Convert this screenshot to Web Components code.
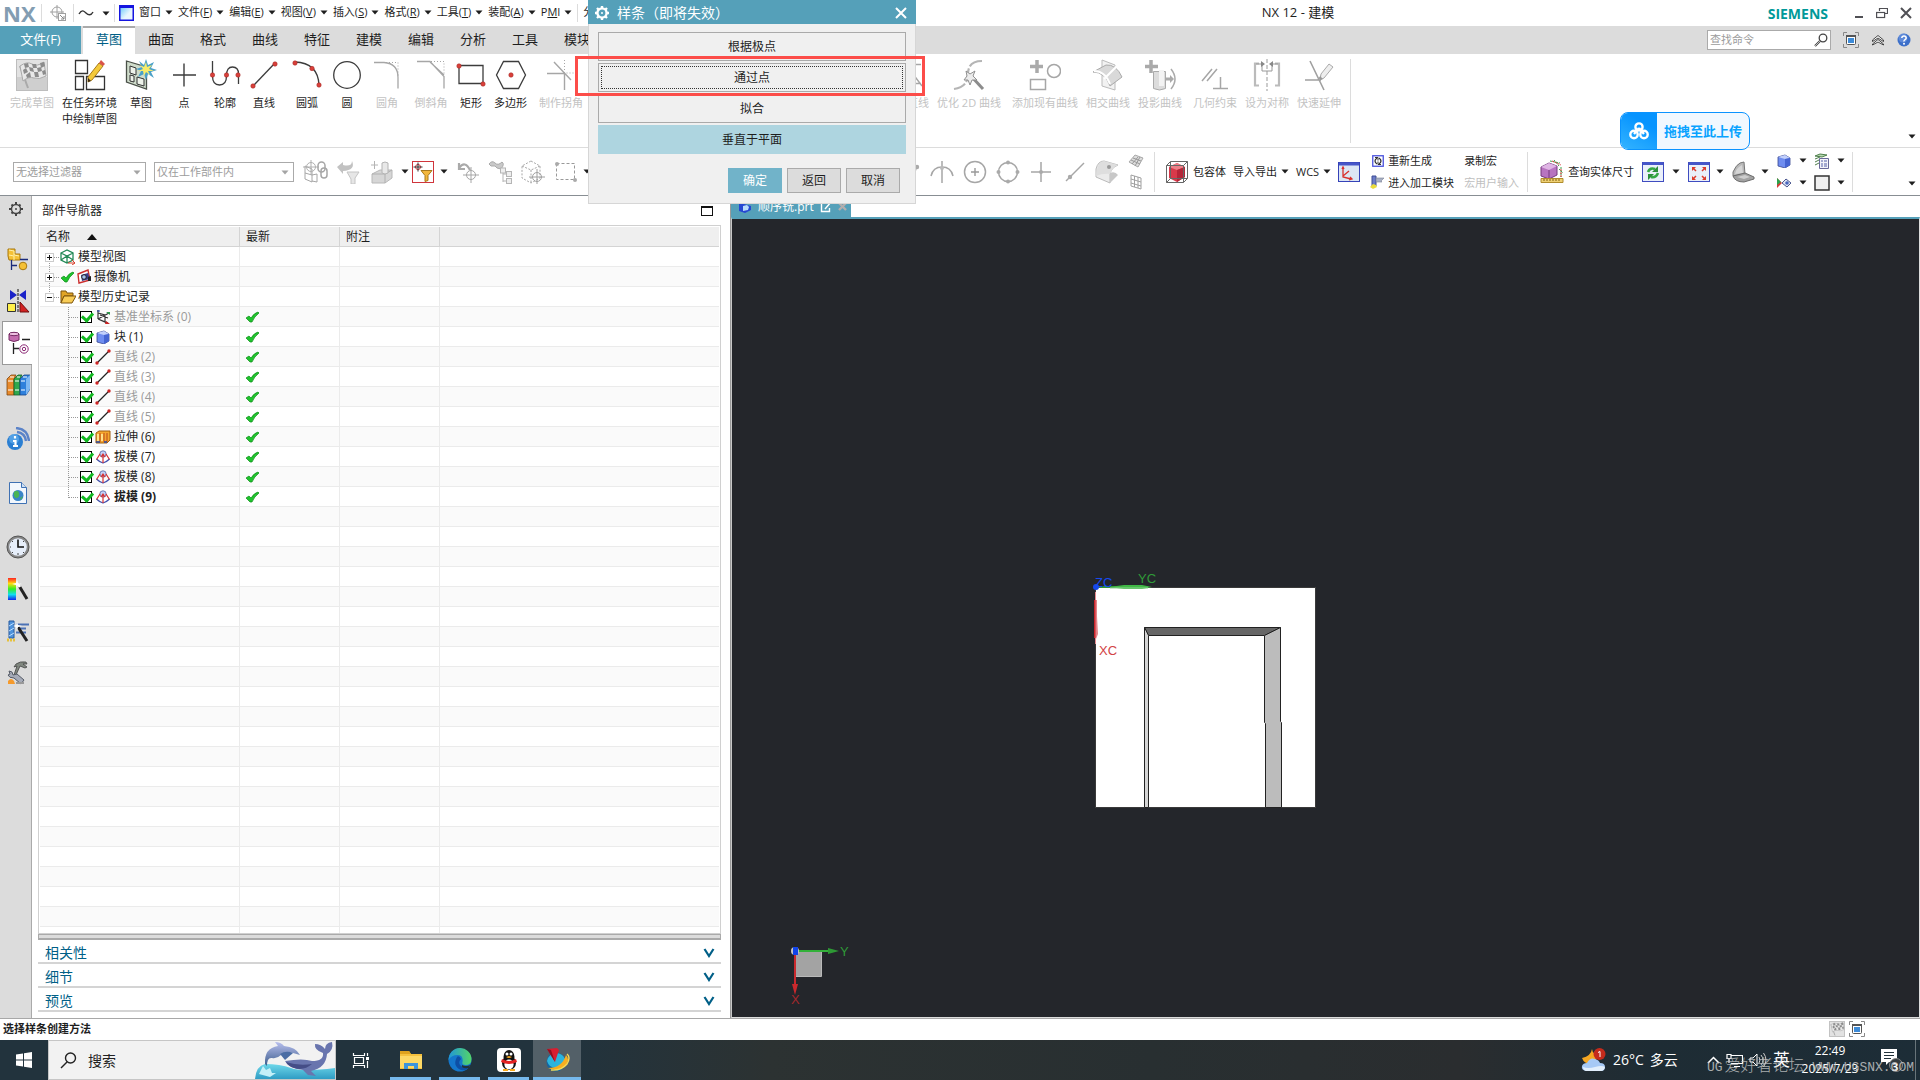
<!DOCTYPE html>
<html lang="zh-CN">
<head>
<meta charset="utf-8">
<title>NX 12 - 建模</title>
<style>
	html,body{margin:0;height:100%}
	body{
		display:flex;flex-direction:column;position:relative;overflow:hidden;background:white;color:#1e1e1e;
		font:11px/16px "Open Sans","Noto Sans CJK SC",sans-serif;
		--teal:#55a0b9;--line:#dcdcdc;--ink:#005f87;
	}
</style>
</head>
<body>
<nx-titlebar></nx-titlebar>
<nx-tabs></nx-tabs>
<nx-ribbon></nx-ribbon>
<nx-selectbar></nx-selectbar>
<nx-workarea>
	<nx-sidebar slot="rail"></nx-sidebar>
	<part-navigator slot="panel"></part-navigator>
	<nx-viewport></nx-viewport>
</nx-workarea>
<nx-status>选择样条创建方法</nx-status>
<win-taskbar></win-taskbar>
<upload-pill>拖拽至此上传</upload-pill>
<spline-dialog>样条（即将失效）</spline-dialog>
<red-mark></red-mark>
<water-mark>爱好者论坛</water-mark>

<script>
// every icon: [width, height, svg content]
const G='stroke="#a6a6a6" fill="none"';
const K='stroke="#3c3c3c" fill="none" stroke-width="1.3"';
const R='fill="#d9403a" stroke="#a82a26" stroke-width=".6"';
const flag=`<path d="M4 7L12 29" stroke="#aaa" stroke-width="2"/><path d="M4 7q7-5 12-2t12-2l2 14q-7 4-12 2t-11 3z" fill="#e8e8e8" stroke="#aaa"/><path d="M8 5l4-1 1 4-4 1zM16 5l4 0 1 4-4 0zM24 4l4-1 1 4-4 2zM13 8l4 1 1 4-4-1zM21 9l4-1 1 4-4 1zM7 11l3-2 2 4-4 2zM18 13l4 0 1 5-4 0zM10 16l4-3 1 5-4 1zM26 12l3-1 1 4-3 1z" fill="#8c8c8c"/>`;
const cross=(x,y,c)=>`<circle cx="${x}" cy="${y}" r="4.5" fill="none" stroke="${c}"/><path d="M${x-8} ${y}h16M${x} ${y-8}v16" stroke="${c}"/>`;
const ICONS={
	arrow:[8,5,'<path d="M.5.5h7L4 4.5z" fill="#1e1e1e"/>'],
	target:[16,16,'<circle cx="7" cy="7" r="5" fill="none" stroke="#a0a0a0"/><path d="M0 7h14M7 0v14" stroke="#a0a0a0"/><rect x="8.5" y="8.5" width="7" height="7" fill="#fff" stroke="#a0a0a0"/><path d="M10 10l4 4m0-3v3h-3" fill="none" stroke="#888"/>'],
	tilde:[16,8,'<path d="M1 5C4 0 6 2 8 4s5 3 7-1" fill="none" stroke="#333" stroke-width="1.4"/>'],
	window:[15,16,'<defs><linearGradient id="a" x2="1" y2="1"><stop offset="0" stop-color="#5fc4fa"/><stop offset=".6" stop-color="#e9f6fe"/></linearGradient></defs><rect x=".75" y=".75" width="13.5" height="14.5" fill="url(#a)" stroke="#1515e0" stroke-width="1.5"/><path d="M1 2h13" stroke="#1515e0" stroke-width="2"/>'],
	min:[10,12,'<path d="M1 10h8" stroke="#505055" stroke-width="2"/>'],
	restore:[12,12,'<path d="M3.5 4V1.5h8v5H9" fill="none" stroke="#505055" stroke-width="1.2"/><rect x=".6" y="5.5" width="8" height="5" fill="none" stroke="#505055" stroke-width="1.2"/>'],
	close:[12,12,'<path d="M1 1l10 10M11 1L1 11" stroke="#505055" stroke-width="2"/>'],
	search:[14,14,'<circle cx="9" cy="5" r="3.8" fill="#fff" stroke="#444" stroke-width="1.3"/><path d="M6 8l-5 5" stroke="#444" stroke-width="2.2"/><path d="M6 8l-5 5" stroke="#eee" stroke-width=".7"/>'],
	full:[16,16,'<path d="M.5 4V.5H4M12 .5h3.5V4M15.5 12v3.5H12M4 15.5H.5V12" fill="none" stroke="#888"/><rect x="3.5" y="3.5" width="9" height="9" rx="1" fill="#fff" stroke="#555"/><path d="M3 4h10" stroke="#555" stroke-width="2"/><rect x="5" y="6" width="6" height="5" fill="#3d8bd8"/>'],
	up2:[14,12,'<path d="M1.5 6L7 1.5 12.500 6v1.500L7 4 1.500 7.500zM1.500 10L7 5.500l5.500 4.500v1L7 8l-5.500 3z" fill="#fff" stroke="#333" stroke-width=".9"/>'],
	help:[14,14,'<circle cx="7" cy="7" r="6.5" fill="#3c6fc9"/><circle cx="6" cy="5" r="4.5" fill="#759de4" opacity=".6"/><path d="M4.8 5q.2-2 2.2-2t2.2 2q0 1-1.2 1.7T7 8.5" fill="none" stroke="#fff" stroke-width="1.5"/><circle cx="7" cy="10.7" r="1" fill="#fff"/>'],
	finish:[32,32,'<rect x=".5" y=".5" width="31" height="31" fill="#e2e2e2" stroke="#bdbdbd"/><path d="M1 18h30v13H1z" fill="#cfcfcf"/>'+flag],
	task:[32,32,`<path d="M1.5 1.5h12v13h-12zM1.5 17.5h8v13h-8zM12.5 17.5h18v13h-18z" fill="#fff" stroke="#333" stroke-width="1.3"/><path d="M25 4l4 3-11 14-4 2 0-5z" fill="#f4c93a" stroke="#a77b1b"/><path d="M25 4l4 3 2-2-4-4z" fill="#d9544a"/><path d="M14 19l0 4 3-1z" fill="#3b2a14"/>`],
	sketch:[32,32,`<path d="M1.5 2l20 6v22l-20-7z" fill="#cfdccb" stroke="#4a5048" stroke-width="1.3"/><path d="M5 7l6 2v7l-6-2zM5 16l4 1v6l-4-1zM12 18l7 2v7l-7-2z" fill="#eef3ea" stroke="#333"/><path d="M21 0l2 6 6-3-3 6 6 2-6 2 3 6-6-4-2 6-2-6-6 3 3-6-5-2 6-2-3-6 5 4z" fill="#4aa0c8"/><path d="M21 3l1 5 5-2-3 4 5 2-6 0 2 4-4-3-2 4-1-5-5 0 5-2-3-4 4 2z" fill="#f8ec6a"/>`],
	point:[24,32,'<path d="M12 4.5v23M1 16h23" stroke="#3c3c3c" stroke-width="1.4"/>'],
	profile:[32,32,`<path d="M3.5 2v15q0 9 7 9t7-9 6-9 6 7v10" ${K}/><circle cx="3.5" cy="16" r="2.2" ${R}/><circle cx="17.5" cy="16" r="2.2" ${R}/><circle cx="29" cy="16" r="2.2" ${R}/>`],
	line:[28,32,`<path d="M3 27L25 4" ${K}/><circle cx="3" cy="27" r="2.2" ${R}/><circle cx="25" cy="5" r="2.2" ${R}/>`],
	arc:[30,32,`<path d="M3 3Q26 4 27 26" ${K}/><circle cx="3" cy="4" r="2.2" ${R}/><circle cx="20" cy="9.5" r="2.2" ${R}/><circle cx="27" cy="26" r="2.2" ${R}/>`],
	circle:[30,32,`<circle cx="15" cy="16" r="13.3" ${K}/>`],
	fillet:[30,32,`<path d="M2 3.5h10q14 1 14 15v11" ${G} stroke-width="1.3"/><path d="M14 3.5h12v13" ${G} stroke-dasharray="1 2"/>`],
	chamfer:[32,32,`<path d="M2 2.5h13l14 15v12M15 3l14 13" ${G} stroke-width="1.3"/><path d="M16 2.5h13v13" ${G} stroke-dasharray="1 2"/>`],
	rect:[30,32,`<path d="M3 6.5h24v18H3z" ${K}/><circle cx="3" cy="7" r="2.2" ${R}/><circle cx="27" cy="25" r="2.2" ${R}/>`],
	polygon:[32,32,`<path d="M8.5 2.5h15L30.5 16l-7 13.5h-15L1.5 16z" ${K}/><circle cx="16" cy="16" r="2.2" ${R}/>`],
	corner:[32,32,`<path d="M2 14.5h17M19.5 14v17M9 3l17 18" ${G} stroke-width="1.4"/><path d="M19.5 1v13h9" ${G} stroke-dasharray="1 2"/>`],
	derive:[32,32,`<path d="M2 5.5h28M2 24.5h28M22 15l9 12" ${G} stroke-width="1.4"/>`],
	optimize:[32,32,'<path d="M29 2q-14 0-14 13T1 30" fill="none" stroke="#b5b5b5" stroke-width="2.2" stroke-dasharray="14 2"/><path d="M18 17l12 13" stroke="#8c8c8c" stroke-width="3"/><path d="M13 12l4 3 5-3-2 5 4 4-5 0-2 5-2-5-4 0 3-4z" fill="#ececec" stroke="#909090"/>'],
	addcurve:[32,32,`<path d="M8 1v13M1 7.5h13" stroke="#aaa" stroke-width="3.5"/><circle cx="25" cy="12" r="6.5" ${G} stroke-width="1.5"/><path d="M1.5 20.5h15v10h-15z" ${G} stroke-width="1.5"/>`],
	intersect:[32,32,'<path d="M10 1l13 5v25l-13-4z" fill="#f2f2f2" stroke="#bbb"/><path d="M1 13q12 0 17 14l12-9Q24 5 14 6z" fill="#d9d9d9" stroke="#aaa"/><path d="M2 12q11 0 16 13M12 20L25 7" stroke="#fff" fill="none" stroke-width="2"/>'],
	project:[32,32,'<path d="M7 1v13M1 7.5h13" stroke="#aaa" stroke-width="3.5"/><path d="M9.5 12.5h12v17q-6 3-12 0z" fill="#dcdcdc" stroke="#aaa"/><path d="M15 11h5v16h-5z" fill="#f3f3f3"/><path d="M22 20h6" stroke="#aaa" stroke-width="3"/><path d="M26 16l4 4-4 4z" fill="#aaa"/><path d="M27 10q8 10 0 20" fill="none" stroke="#aaa" stroke-width="1.5"/>'],
	geocon:[28,32,`<path d="M1 22l10-12M6 22l10-12M19.5 18v12M12 29.5h15" ${G} stroke-width="1.5"/>`],
	symmetric:[28,32,'<path d="M6 4.5H2v22h4M22 4.5h4v22h-4" fill="none" stroke="#bbb" stroke-width="2.2"/><path d="M14 0v32" stroke="#999" stroke-dasharray="4 2"/><path d="M3 5h6v7h10V5h6" fill="none" stroke="#999"/><path d="M8 2l4 3-4 3zM20 2l-4 3 4 3z" fill="#888"/>'],
	extend:[30,32,'<path d="M1 21h16M6 2l14 29M14 21l4-5" fill="none" stroke="#a0a0a0" stroke-width="1.6"/><path d="M25 5l4 3-9 11-4 2 1-6z" fill="#eee" stroke="#aaa"/><path d="M16 17v4l3-1z" fill="#999"/>'],
	link:[26,24,`<path d="M2 6l7 3v13l-7-3zM9 15l5-1v8l-5-1M2 13l7 2" ${G}/>${cross(8,7,'#b0b0b0')}<rect x="15" y="2" width="7" height="10" rx="3.5" ${G} stroke-width="1.5"/><rect x="18" y="8" width="6" height="10" rx="3" ${G} stroke-width="1.5"/>`],
	backfilter:[24,24,'<path d="M1 7l6-5v3q9 2 9-4 4 9-9 10v3z" fill="#c2c2c2"/><path d="M11 12h12l-4 6v6h-4v-5z" fill="#e6e6e6" stroke="#c4c4c4"/>'],
	solid:[24,24,'<path d="M2 14l8-4h12v8l-7 5H2z" fill="#d6d6d6" stroke="#b8b8b8"/><path d="M2 14h13v9M15 14l7-4" fill="none" stroke="#b0b0b0"/><path d="M12 3q3-2 6 0v10q-3 2-6 0z" fill="#e8e8e8" stroke="#b4b4b4"/><path d="M1 5h7M4.5 1v8" stroke="#b4b4b4"/>'],
	filter:[22,22,'<rect x=".5" y=".5" width="21" height="21" fill="#fff" stroke="#d0353c"/><circle cx="6" cy="6" r="2.5" fill="none" stroke="#d0353c"/><path d="M1.5 6h9M6 1.5v9" stroke="#333"/><path d="M9 9.5h11l-4 5v5l-3 1v-6z" fill="#f3b73c" stroke="#a8791b"/>'],
	rotback:[24,24,'<path d="M3 3v6h6M3 8q6-8 11 2" fill="none" stroke="#aaa" stroke-width="2.2"/>'+cross(15,15,'#a6a6a6')],
	binoc:[24,24,'<path d="M1 4q3-4 6-1t7-1q3 2-1 7l-4-1-2-2-4 0z" fill="#c9c9c9" stroke="#aaa"/><path d="M15 8v14M15 14h5M15 21h5" stroke="#b5b5b5"/><rect x="12.5" y="8" width="5" height="5" fill="#eee" stroke="#b5b5b5"/><rect x="18.5" y="11.5" width="5" height="5" fill="#eee" stroke="#b5b5b5"/><rect x="18.5" y="18.5" width="5" height="5" fill="#eee" stroke="#b5b5b5"/>'],
	dashcube:[24,24,`<path d="M10 1l9 5v12l-9 5-9-5V6zM1 6l9 4 9-4M10 10v13" ${G} stroke-dasharray="2 1.5"/>${cross(16,17,'#a0a0a0')}`],
	marquee:[22,22,'<rect x="1.5" y="2.5" width="18" height="16" fill="none" stroke="#999" stroke-dasharray="3 2"/><circle cx="2" cy="3" r="2" fill="#aaa"/><circle cx="20" cy="19" r="2" fill="#aaa"/>'],
	endpt:[20,24,`<path d="M3 21q12-4 13-13" ${G} stroke-width="1.8"/><circle cx="17" cy="7" r="2.2" fill="#aaa"/>`],
	snapx:[24,24,`<path d="M12 1v22M1 16q2-9 11-9t11 9" ${G} stroke-width="1.5"/><circle cx="12" cy="8" r="2" fill="#bbb"/>`],
	center:[24,24,`<circle cx="12" cy="12" r="10.5" ${G} stroke-width="1.5"/><path d="M8 12h8M12 8v8" stroke="#999" stroke-width="1.4"/>`],
	quad:[24,24,`<circle cx="12" cy="12" r="9.5" ${G} stroke-width="1.5"/><g fill="#aaa"><circle cx="12" cy="2.5" r="2"/><circle cx="21.5" cy="12" r="2"/><circle cx="12" cy="21.5" r="2"/><circle cx="2.5" cy="12" r="2"/></g>`],
	exist:[22,24,'<path d="M11 2v20M1 12h20" stroke="#a6a6a6" stroke-width="1.5"/><circle cx="11" cy="12" r="2" fill="#aaa"/>'],
	oncurve:[20,22,'<path d="M1 20L19 2" stroke="#a6a6a6" stroke-width="1.5"/><circle cx="5" cy="16" r="2.2" fill="#aaa"/>'],
	face:[24,24,'<path d="M1 9Q3 1 9 1l14 4q-7 3-8 9v9L1 17z" fill="#ebebeb" stroke="#bbb"/><path d="M9 1l14 4q-7 3-7 9-8-1-15 2Q2 2 9 1z" fill="#dedede"/><path d="M15 13q5-2 8 2l-8 8z" fill="#c8c8c8"/><circle cx="14" cy="7" r="2" fill="#999"/>'],
	mesh:[16,14,'<path d="M1 8L7 1l8 3-5 9z" fill="#ddd" stroke="#aaa"/><path d="M3 6l9 4M5 4l8 3M4 10l6-7M7 12l5-9" stroke="#999"/>'],
	grid:[12,16,'<path d="M1 1l10 3v11L1 12zM1 5l10 3M1 9l10 3M4.5 2v11M8 3v11" fill="none" stroke="#a0a0a0"/>'],
	bbox:[24,24,'<path d="M4 7l8-4 8 4v10l-8 5-8-4z" fill="#d8394a"/><path d="M4 7l8-4 8 4-8 3z" fill="#ee8088"/><path d="M12 10l8-3v10l-8 5z" fill="#b52538"/><path d="M1.5 5.5h17v17h-17zM5.5 1.5h17v17h-17zM1.5 5.5l4-4M18.5 5.5l4-4M18.5 22.5l4-4M1.5 22.5l4-4" fill="none" stroke="#666"/>'],
	wcs:[22,20,'<rect x=".5" y=".5" width="21" height="19" fill="#dbe6f4" stroke="#3542b8"/><path d="M1 2h20" stroke="#4656c8" stroke-width="3"/><path d="M5 5v10l8 2M5 14l6-5M4 7l1-2 1 2M12 15l2 2-3 1" fill="none" stroke="#d8302c" stroke-width="1.3"/>'],
	regen:[12,12,'<rect x=".75" y=".75" width="10.5" height="10.5" fill="#fff" stroke="#4a52dc" stroke-width="1.3"/><path d="M5 3Q1 6 5 9M7 3q4 3 0 6" fill="none" stroke="#333" stroke-width="1.3"/><path d="M3 2.5h3v3M9 9.5H6v-3" fill="none" stroke="#333"/>'],
	cam:[14,15,'<path d="M2 1h4v10H2z" fill="#6b7cc8" stroke="#3f4d94"/><path d="M6 3h8l-3 3 1 1H6z" fill="#a9b1c5" stroke="#7a8096" stroke-width=".6"/><path d="M0 12l3 2 4-2-1-2-3-1z" fill="#eadc3c"/>'],
	measure:[24,24,'<path d="M1 7l8-4 8 3v9l-8 4-8-3z" fill="#b774c0" stroke="#74397d"/><path d="M1 7l8 3 8-4-8-3z" fill="#dfb5e4"/><path d="M9 10v9" stroke="#74397d"/><path d="M10 1l10 2M14 0l5 6M21 7v10M19 9l4 4" stroke="#3a9e4b" stroke-dasharray="2 1"/><path d="M12 1l9 4M21 9v8" stroke="#dc3c3c" stroke-dasharray="2 1"/><path d="M1 18.5h22v4H1z" fill="#efd073" stroke="#b08d2e"/><path d="M4 19v2m3-2v2m3-2v2m3-2v2m3-2v2m3-2v2" stroke="#806010"/>'],
	refresh:[22,20,'<rect x=".5" y=".5" width="21" height="19" fill="#eaf0fa" stroke="#3f4cc0"/><path d="M1 1.5h20" stroke="#4656c8" stroke-width="3"/><path d="M6 10q2-5 7-3M16 11q-2 5-7 4" fill="none" stroke="#35a845" stroke-width="2.6"/><path d="M16 4v6h-6zM6 18v-6h6z" fill="#2c8f3a"/>'],
	fit:[22,20,'<rect x=".5" y=".5" width="21" height="19" fill="#eaf0fa" stroke="#3f4cc0"/><path d="M1 1.5h20" stroke="#4656c8" stroke-width="3"/><path d="M5 6l3 3M17 6l-3 3M5 17l3-3M17 17l-3-3" stroke="#dc3c2c" stroke-width="1.5"/><path d="M4 5h4l-4 4zM18 5h-4l4 4zM4 18h4l-4-4zM18 18h-4l4-4z" fill="#dc3c2c"/>'],
	laptop:[24,22,'<path d="M2 15V11Q5 4 9 2l4-1 1 12z" fill="#b9b9b9" stroke="#777"/><path d="M4 13q1-6 7-9l1 8z" fill="#d6d6d6"/><path d="M2 15l12-3 9 4v2l-10 3q-9 0-11-6z" fill="#a2a2a2" stroke="#6c6c6c"/><path d="M6 16l8-2 5 2-6 2z" fill="#cdcdcd"/>'],
	cube:[14,14,'<path d="M1 3l7-2 5 3v7l-5 3-7-2z" fill="#6f8df0" stroke="#38468f" stroke-width=".8"/><path d="M1 3l7 2 5-1-5-3z" fill="#c2d0fb"/><path d="M8 5v9l5-3V4z" fill="#4564d2"/>'],
	layers:[16,16,'<path d="M1 3l5-2 7 1-5 2zM1 6l5-2M1 9l4-2M1 12l4-2" fill="#b7d9b0" stroke="#4f7f4d"/><path d="M5.5 5.5h9v10h-9z" fill="#f3f3fa" stroke="#6a6a9a"/><path d="M7 8h2m1 0h3M7 11h2m1 0h3M7 13h2m1 0h3" stroke="#5561a8"/>'],
	showhide:[16,12,'<path d="M1 1l5 5-5 5z" fill="#d53a3a"/><path d="M1 1l4 4-4 3z" fill="#2ba24c"/><path d="M6 6l4-4 5 4-4 4z" fill="#dfe4f3" stroke="#4a568e"/><circle cx="11" cy="6" r="1.8" fill="#4765bc"/>'],
	white:[16,16,'<rect x="1" y="1" width="14" height="14" fill="#f0f0f0" stroke="#333" stroke-width="1.5"/>'],
	gear:[14,14,'<circle cx="7" cy="7" r="4.5" fill="none" stroke="#444" stroke-width="1.4"/><path d="M7 0v2.5m0 9V14M0 7h2.5m9 0H14M2.5 2.5L4 4m6 6l1.5 1.5M11.5 2.5L10 4m-6 6l-1.5 1.5" stroke="#444" stroke-width="2"/><circle cx="7" cy="7" r="1" fill="#444"/>'],
	asm:[24,24,'<path d="M2 2h7v5h5v6H3l-1-4z" fill="#f5c136" stroke="#a8790f"/><path d="M3 3l5 1v4l5 1M3 8l5 1v4" stroke="#fff0a8" fill="none"/><path d="M14 12.5h8M5.5 13v10M5 18.5h6" stroke="#1a2a7a" stroke-width="1.3"/><circle cx="17" cy="19" r="3.8" fill="#f5c136" stroke="#a8790f"/>'],
	constraint:[24,24,'<path d="M4 1l7 5-7 5zM20 1l-7 5 7 5z" fill="#1a22c8"/><path d="M12 0v24" stroke="#111" stroke-dasharray="3 1"/><path d="M1.5 14.5h8v8h-8z" fill="#fff04a" stroke="#333"/><path d="M14 13l9 10h-9z" fill="#d22222" stroke="#701010"/>'],
	partnav:[24,24,'<path d="M1 3q5-3 10 0v6q-5 3-10 0z" fill="#c46cae" stroke="#762d64"/><ellipse cx="6" cy="3" rx="5" ry="1.7" fill="#efc1e2" stroke="#762d64"/><path d="M14 8.5h8M5.5 12v11M5 17.5h6" stroke="#222" stroke-width="1.3"/><circle cx="16" cy="18" r="4.2" fill="#fff" stroke="#8c2a76"/><circle cx="16" cy="18" r="1.7" fill="#fff" stroke="#8c2a76"/>'],
	books:[24,24,'<path d="M1 6l4-4h5L8 6v16H1z" fill="#e88a2c" stroke="#7d4612" stroke-width=".8"/><path d="M8 6l4-4h4l-2 4v16H8z" fill="#2fa84d" stroke="#14612a" stroke-width=".8"/><path d="M14 6l4-4h6v14l-4 6h-6z" fill="#2f80dc" stroke="#154589" stroke-width=".8"/><path d="M20 6l4-4v14l-4 6z" fill="#7fb8f2"/><path d="M2 8h5M2 17h5M9 8h4M9 17h4M15 8h4M15 17h4" stroke="#fff" stroke-width="1.2"/><path d="M4 4h4M11 4h3M17 4h4" stroke="#fff"/>'],
	info:[24,24,'<circle cx="9" cy="15" r="8" fill="#2b7fd2"/><circle cx="8" cy="12" r="5" fill="#6db5f2" opacity=".6"/><path d="M9 9v2.5M7 14h2.5v5M7 19h5" fill="none" stroke="#fff" stroke-width="2.2"/><path d="M11 5q8 1 9 9M10 1q12 1 13 13" fill="none" stroke="#5b83c8" stroke-width="2.4"/>'],
	web:[20,24,'<path d="M1.5 1.5h12l5 5v16h-17z" fill="#f2f7fd" stroke="#3f71b3"/><path d="M13.5 1.5v5h5" fill="#cfe0f3" stroke="#3f71b3"/><circle cx="10" cy="14.5" r="5.5" fill="#3a85c8"/><path d="M6 11q4-3 5 1t-2 5q-4 0-3-6M12 17l3-2-2 4z" fill="#49b355"/>'],
	clock:[24,24,'<circle cx="12" cy="12" r="11" fill="#888" stroke="#555"/><circle cx="12" cy="12" r="8.8" fill="#e6eefa"/><path d="M12 4.5V12h6" fill="none" stroke="#111" stroke-width="1.6"/><path d="M12 18v2M5 12H4M7 7l-1-1M17 17l1 1M17 7l1-1M7 17l-1 1" stroke="#444"/>'],
	rainbow:[24,24,'<defs><linearGradient id="r" x2="0" y2="1"><stop offset="0" stop-color="#f22"/><stop offset=".25" stop-color="#fd1"/><stop offset=".5" stop-color="#3e2"/><stop offset=".75" stop-color="#1de"/><stop offset="1" stop-color="#12e"/></linearGradient></defs><path d="M2 1h8v22H2z" fill="url(#r)"/><path d="M12 7l9 15" stroke="#222" stroke-width="3"/><path d="M12 7l2 3" stroke="#fff" stroke-width="3"/><path d="M11 2l1 4 4 1-4 1-1 4-1-4-4-1 4-1z" fill="#fff"/>'],
	wizard:[24,24,'<path d="M3 2h5v17H3z" fill="#4f93dc" stroke="#265ba0"/><path d="M3 7l5-3M3 12l5-3M3 17l5-3" stroke="#bfe0ff"/><path d="M10 5.5h13M12 9.5h8M10 13.500h10" stroke="#4c72b5" stroke-width="2"/><path d="M12 8l9 14" stroke="#222" stroke-width="3"/><path d="M11 3l1 3 4 1-4 1-1 3-1-3-3-1 3-1z" fill="#fff"/><path d="M1 21h9" stroke="#e6c13c" stroke-width="3" stroke-dasharray="2 1"/>'],
	tools:[24,24,'<path d="M10 3q4-3 10-2l1 2h-4l4 3-2 1-5-2-4 9h-2l3-9-3 1z" fill="#80877f" stroke="#444" stroke-width=".8"/><path d="M3 10l3 1 1 3 4-1 7 6-3 4-7-6q-5 0-6-3l2-1z" fill="#a6abb8" stroke="#555b66"/><path d="M2 20q3-4 6 0l1 3H2z" fill="#f59a2c"/><path d="M10 22h8" stroke="#999" stroke-width="2"/>'],
	views:[16,16,'<path d="M1 4l6-3 6 3v7l-6 3-6-3zM1 4l6 3 6-3M7 7v7M1 11l6-4 6 4" fill="none" stroke="#238a57" stroke-width="1.3"/><path d="M8 14l7 0M12 11l3 3-3 2" stroke="#d8402c" fill="none"/>'],
	camera:[16,16,'<path d="M2 5l10-4 2 10-11 3z" fill="#fff" stroke="#cc2e2e" stroke-width="1.4"/><path d="M5 6l7-2 2 6-8 2z" fill="#3b3f8e"/><circle cx="8" cy="8" r="2.3" fill="#aac4f2" stroke="#222"/><path d="M12 8l3-1v5h-3z" fill="#222"/>'],
	folder:[16,14,'<path d="M1 3V1h5l1 2h6v3H4l-3 7z" fill="#e1a526" stroke="#7d540c"/><path d="M4 6h12l-4 7H1z" fill="#f8cc56" stroke="#7d540c"/>'],
	datum:[16,16,'<path d="M3 1v9M3 10l10 4M3 10l11-6M3 4l7 2v7l-7-3M5 6l8 3" fill="none" stroke="#333" stroke-width="1.2"/><path d="M2 2h3" stroke="#24a"/><path d="M11 3h4v3z" fill="#2a9a4a"/><path d="M11 12l4 3h-5z" fill="#c22"/>'],
	seg:[16,16,'<path d="M2 14L14 2" stroke="#222" stroke-width="1.2"/><circle cx="2" cy="14" r="1.7" fill="#c22"/><circle cx="14" cy="2" r="1.7" fill="#c22"/>'],
	extrude:[16,14,'<path d="M1 3l3-2h11v9l-3 3H1z" fill="#f5a62e" stroke="#a05f10"/><path d="M5 3v9M9 3v9M12 3v9" stroke="#b8481a"/><path d="M2 4h2v7H2zM6 4h2v7H6z" fill="#ffe28a"/><path d="M1 12h4m4 0h3" stroke="#2546a8" stroke-width="1.4"/>'],
	draft:[16,14,'<path d="M1.5 9q3 3 6.5 4 3.500-1 6.500-4" fill="none" stroke="#3f4fae" stroke-width="1.3"/><circle cx="8" cy="4" r="3.2" fill="#c3d1f7" stroke="#55639f" stroke-width=".8"/><path d="M8 4v9M5 4L1.500 9.500M11 4l3.500 5.500M6 7l2-3 2 3" fill="none" stroke="#d83030" stroke-width="1.2"/>'],
	tick:[14,12,'<path d="M1 7l3-2 2 2q3-5 7-6l1 1q-5 4-7 9H5z" fill="#1fc42c" stroke="#0d8a1a" stroke-width=".7"/>'],
	chev:[12,10,'<path d="M1.5 1L6 8l4.5-7" fill="none" stroke="#005f87" stroke-width="2.2"/>'],
	part:[14,12,'<path d="M1 0h5v3l7 2v4l-6 3-6-2z" fill="#2647d2"/><path d="M5 5l4-1 2 2-1 3-5 1z" fill="#b8dcfb"/>'],
	edit:[12,12,'<path d="M6 1.5H1.5v9h8V7M5 8l6-7M8 1h3" fill="none" stroke="#fff" stroke-width="1.4"/>'],
	cog:[16,16,'<circle cx="8" cy="8" r="4.6" fill="none" stroke="#fff" stroke-width="2.4"/><path d="M8 1v2m0 10v2M1 8h2m10 0h2M3 3l1.5 1.5m7 7L13 13M13 3l-1.5 1.5m-7 7L3 13" stroke="#fff" stroke-width="2.4"/><circle cx="8" cy="8" r="1" fill="#fff"/>'],
	closew:[12,12,'<path d="M1 1l10 10M11 1L1 11" stroke="#fff" stroke-width="2"/>'],
	closeg:[9,9,'<path d="M1 1l7 7M8 1L1 8" stroke="#b3aeae" stroke-width="2.4"/>'],
	win:[16,16,'<path d="M0 2.5l7-1v6H0zM8 1.3L16 0v7.5H8zM0 8.5h7v6l-7-1zM8 8.5h8V16l-8-1.3z" fill="#fff"/>'],
	lens:[17,17,'<circle cx="10.5" cy="6" r="5" fill="none" stroke="#222" stroke-width="1.4"/><path d="M7 10l-6 6" stroke="#222" stroke-width="1.4"/>'],
	dolphin:[80,38,'<defs><linearGradient id="d" x2="0" y2="1"><stop offset="0" stop-color="#b8bfee"/><stop offset="1" stop-color="#3c5d8c"/></linearGradient><linearGradient id="s" x2="0" y2="1"><stop offset="0" stop-color="#6fd8ea"/><stop offset="1" stop-color="#2f9cc4"/></linearGradient></defs><path d="M0 38q1-13 10-15 15 0 26 4t44 0v11z" fill="url(#s)"/><path d="M10 23q-1-16 13-18l-3-4q6 0 9 4 12 1 16 9l-7-2q-8-2-12 2t-9 3-5 8z" fill="url(#d)"/><path d="M25 13q6-4 13-1l-8 7z" fill="#4b6da4"/><path d="M30 20q18-3 27 0 12 0 11-8-9-3-8-9 6 0 10 5 0-6 7-7 2 8-5 12-1 14-16 17l5 5-8-1-5-5q-15-2-18-9z" fill="#6975ae"/><path d="M31 21q12 4 26 2-8 7-18 4-6-2-8-6z" fill="#454d87"/><path d="M4 33l4-8 3 4 4-2 2 5 4 0-6 4z" fill="#c4f0f8"/>'],
	taskview:[17,17,'<path d="M2.5 5.5h9v6h-9zM1.5 1v2.5h11V1M1.5 16v-2.5h11V16M15.5 1v3m0 5v7" fill="none" stroke="#fff" stroke-width="1.2"/><path d="M14 5h3v3h-3z" fill="#fff"/>'],
	explorer:[24,20,'<path d="M1 1h9l2 3h11v15H1z" fill="#f5c13d"/><path d="M1 1h9l2 3H1z" fill="#dfa31e"/><path d="M1 6h22v12H1z" fill="#fdd966"/><path d="M5 19v-6h14v6h-4v-3H9v3z" fill="#3c94dc"/>'],
	edge:[24,24,'<defs><linearGradient id="e" x2="1"><stop offset="0" stop-color="#2097d8"/><stop offset="1" stop-color="#54d567"/></linearGradient></defs><circle cx="12" cy="12" r="11.5" fill="#1477cc"/><path d="M.5 12A11.5 11.5 0 0 1 23.5 11q0 6-6 6-4 0-3-3 1-7-5-7T.5 12z" fill="url(#e)"/><path d="M9 9q-5 9 4 13 6 1 9-4-7 3-10-1-2-3 1-6-2-4-4-2z" fill="#0d4fa5"/><path d="M14 17q4 2 8 0l-1 3q-8 1-7-3z" fill="#22333d"/>'],
	qq:[24,24,'<rect width="24" height="24" rx="4" fill="#fff"/><ellipse cx="12" cy="9" rx="5.5" ry="7" fill="#111"/><ellipse cx="12" cy="15" rx="7" ry="7" fill="#111"/><ellipse cx="12" cy="16.5" rx="4.6" ry="5" fill="#fff"/><path d="M5 11q7 4 14 0l1 3q-8 4-16 0z" fill="#e32222"/><circle cx="10" cy="6" r="1.5" fill="#fff"/><circle cx="14" cy="6" r="1.5" fill="#fff"/><path d="M9 9q3 2 6 0l-3-1zM6 21h5v2H6zM13 21h5v2h-5z" fill="#f8a81c"/>'],
	nx:[26,26,'<circle cx="12" cy="15" r="9.5" fill="#1565a0"/><path d="M3 14q2-8 10-8 6 1 8 6-3 7-9 9-7 0-9-7z" fill="#2cb4dc"/><path d="M4 21q14 0 18-13 4 4 0 10-7 8-18 3z" fill="#f7ae20"/><path d="M23 7q4 3 0 10-6 7-16 6" fill="none" stroke="#f6da55" stroke-width="1.4"/><path d="M3 2l10-1 2 2-4 12z" fill="#d81e30"/><path d="M3 2l4 1 4 12z" fill="#8f1020"/>'],
	weather:[26,24,'<path d="M11 1q-1 7-10 9 3 8 12 5 5-5 1-9-3-2-3-5z" fill="#f5a722"/><path d="M5 23q-5-1-4-5 1-3 5-3 3-6 8-4 4 1 5 4 5 0 5 4t-4 4z" fill="#a6c9f5"/><path d="M2 19q5 2 12 0t10 0q-1 4-4 4H5q-3-1-3-4z" fill="#e2effc"/><circle cx="18.5" cy="6" r="6" fill="#c42b1c"/><path d="M17 4.5l2-1V9" fill="none" stroke="#fff"/>'],
	trayup:[13,9,'<path d="M1 7l5.5-5.5L12 7" fill="none" stroke="#fff" stroke-width="1.5"/>'],
	net:[17,14,'<path d="M4.5 2.5h12v8H5M1 1.5h4v4H1zM3 6v4M8 13.5h6" fill="none" stroke="#fff" stroke-width="1.2"/>'],
	sound:[18,16,'<path d="M1 6h3l4-4v12l-4-4H1z" fill="none" stroke="#fff"/><path d="M10 5q2 3 0 6M12 3q4 5 0 10M14.5 1q5 7 0 14" fill="none" stroke="#ccc"/>'],
	note:[24,24,'<path d="M1 1h16v13H9l-3 3v-3H1z" fill="#fff"/><path d="M4 4.5h10M4 7.5h10M4 10.5h7" stroke="#22323b"/><circle cx="16" cy="17" r="6.5" fill="#333a3e" stroke="#888"/>'],
	miniflag:[16,16,'<rect x=".5" y=".5" width="15" height="15" fill="#e2e2e2" stroke="#c3c3c3"/><g transform="scale(.5)">'+flag+'</g>'],
	cloud:[20,18,'<path d="M10 6L5 12M10 6l5 6" stroke="#fff" stroke-width="2.4"/><g fill="none" stroke="#fff" stroke-width="2.4"><circle cx="10" cy="5" r="3.6"/><circle cx="5" cy="12.5" r="3.7"/><circle cx="15" cy="12.5" r="3.7"/></g>']
};

function svg(name){
	const [w,h,body]=ICONS[name];
	return `<svg width="${w}" height="${h}" viewBox="0 0 ${w} ${h}" aria-hidden="true">${body}</svg>`;
}

// styles that every shadow root starts with
const BASE=`
	:host,*{box-sizing:border-box}
	svg{display:block;flex:none}
	button{font:inherit;color:inherit;background:none;border:0;padding:0;margin:0;cursor:pointer}
`;

function define(name,render){
	customElements.define(name,class extends HTMLElement{
		constructor(){
			super();
			const template=document.createElement('template');
			template.innerHTML=`<style>${BASE}</style>`+render(this);
			this.attachShadow({mode:'open'}).appendChild(template.content.cloneNode(true));
		}
	});
}

// icon, optional label, fixed cell width
define('tool-button',el=>`
<style>
	:host{display:flex;flex:none;width:${el.getAttribute('w')?el.getAttribute('w')+'px':'auto'};justify-content:center}
	button{display:flex;align-items:center;justify-content:center;gap:4px;white-space:nowrap}
	:host([disabled]) button{color:#c0c0c0;cursor:default}
</style>
<button type="button"${el.hasAttribute('disabled')?' disabled':''}>${el.getAttribute('icon')?svg(el.getAttribute('icon')):''}<slot></slot>${el.hasAttribute('menu')?svg('arrow'):''}</button>`);

define('ribbon-tool',el=>`
<style>
	:host{display:block;flex:none;width:${el.getAttribute('w')}px}
	button{display:flex;flex-direction:column;align-items:center;gap:4px;width:100%;text-align:center;white-space:nowrap}
	:host([disabled]) button{color:#c3c3c3;cursor:default}
</style>
<button type="button"${el.hasAttribute('disabled')?' disabled':''}>${svg(el.getAttribute('icon'))}<span><slot></slot></span></button>`);

const MENUS=[['窗口',''],['文件','F'],['编辑','E'],['视图','V'],['插入','S'],['格式','R'],['工具','T'],['装配','A']];
define('nx-titlebar',()=>`
<style>
	:host{display:flex;align-items:center;flex:none;height:26px;position:relative}
	.logo{width:41px;padding-left:3px;font-size:22px;font-weight:700;color:#839db2;flex:none}
	.sep{width:1px;height:18px;background:#dcdcdc;flex:none}
	.icons{display:flex;align-items:center;justify-content:center;gap:8px;flex:none}
	.a{width:31px}.b{width:40px}
	nav{display:flex;align-items:center;gap:5px;padding-left:4px;white-space:nowrap}
	nav button{display:flex;align-items:center;gap:4px;padding-bottom:2px}
	h1{position:absolute;left:0;right:0;margin:0;padding:0 0 2px 676px;text-align:center;font-size:13px;font-weight:400;pointer-events:none}
	.brand{margin-left:auto;font-size:14px;font-weight:700;color:#009999;padding-right:26px;padding-top:2px}
	.win{display:flex;gap:12px;padding-right:8px}
</style>
<div class="logo">NX</div><i class="sep"></i>
<div class="icons a">${svg('target')}</div><i class="sep"></i>
<div class="icons b">${svg('tilde')}${svg('arrow')}</div><i class="sep"></i>
<nav>${svg('window')}
${MENUS.map(m=>`<button type="button"><span>${m[0]}${m[1]?`(<u>${m[1]}</u>)`:''}</span>${svg('arrow')}</button>`).join('')}
<button type="button"><span>P<u>M</u>I</span>${svg('arrow')}</button>
<i class="sep"></i><button type="button">分析</button></nav>
<h1>NX 12 - 建模</h1>
<div class="brand">SIEMENS</div>
<div class="win"><button type="button" aria-label="最小化">${svg('min')}</button><button type="button" aria-label="还原">${svg('restore')}</button><button type="button" aria-label="关闭">${svg('close')}</button></div>`);

define('nx-tabs',()=>`
<style>
	:host{display:flex;align-items:stretch;flex:none;height:28px;background:#dcdcdc;font-size:13px}
	nav{display:flex}
	nav button{width:52px;border-top:2px solid transparent;padding-bottom:4px}
	nav .file{width:81px;margin-right:2px;background:var(--teal);color:white}
	nav .on{background:white;color:var(--ink);border-top-color:#aaa}
	.right{margin-left:auto;display:flex;align-items:center;gap:12px;padding-right:9px}
	label{display:flex;align-items:center;width:124px;height:20px;background:white;border:1px solid #aaa;padding:0 2px}
	input{flex:1;min-width:0;border:0;outline:0;padding:0;font:11px/16px "Open Sans","Noto Sans CJK SC",sans-serif}
	input::placeholder{color:#9c9c9c;opacity:1}
</style>
<nav><button type="button" class="file">文件(F)</button>
<button type="button" class="on">草图</button>${['曲面','格式','曲线','特征','建模','编辑','分析','工具','模块'].map(t=>`<button type="button">${t}</button>`).join('')}</nav>
<div class="right"><label><input type="text" placeholder="查找命令" aria-label="查找命令">${svg('search')}</label>
<button type="button" aria-label="全屏">${svg('full')}</button><button type="button" aria-label="收起">${svg('up2')}</button><button type="button" aria-label="帮助">${svg('help')}</button></div>`);

define('nx-ribbon',()=>`
<style>
	:host{display:flex;flex:none;height:94px;border-bottom:1px solid var(--line);padding:5px 0 4px 6px}
	.hidden{width:293px;flex:none}
	.end{width:1px;background:var(--line);margin-left:3px}
	.more{margin-left:auto;align-self:flex-end;padding:0 4px 4px 0}
</style>
${[['finish',52,'完成草图',1],['task',63,'在任务环境<br>中绘制草图'],['sketch',40,'草图'],['point',46,'点'],['profile',36,'轮廓'],['line',42,'直线'],['arc',44,'圆弧'],['circle',36,'圆'],['fillet',44,'圆角',1],['chamfer',44,'倒斜角',1],['rect',36,'矩形'],['polygon',43,'多边形'],['corner',58,'制作拐角',1],0,['derive',48,'派生直线',1],['optimize',76,'优化 2D 曲线',1],['addcurve',76,'添加现有曲线',1],['intersect',50,'相交曲线',1],['project',54,'投影曲线',1],['geocon',56,'几何约束',1],['symmetric',48,'设为对称',1],['extend',56,'快速延伸',1]].map(t=>t?`<ribbon-tool icon="${t[0]}" w="${t[1]}"${t[3]?' disabled':''}>${t[2]}</ribbon-tool>`:'<div class="hidden"></div>').join('')}
<i class="end"></i>
<button type="button" class="more" aria-label="更多">${svg('arrow')}</button>`);

const tool=(icon,w)=>`<tool-button icon="${icon}" w="${w}"></tool-button>`;
define('nx-selectbar',()=>`
<style>
	:host{display:flex;align-items:center;flex:none;height:48px;border-bottom:1px solid #888e93;padding-left:13px}
	.pick{position:relative;flex:none;width:133px;margin-right:8px}
	.scope{width:140px;margin-right:6px}
	.pick svg{position:absolute;right:5px;top:8px;opacity:.4}
	select{appearance:none;width:100%;height:20px;border:1px solid #aaa;border-radius:0;background:white;color:#9c9c9c;font:11px/16px "Open Sans","Noto Sans CJK SC",sans-serif;padding:0 2px}
	.gap{width:302px;flex:none}
	.sep{width:1px;height:40px;background:var(--line);flex:none}
	.stack{display:flex;flex-direction:column;gap:6px;align-items:flex-start;justify-content:center}
	.row{display:flex;align-items:center}
	.named{display:flex;align-items:center;gap:7px;padding-left:10px}
	.more{margin-left:auto;padding:24px 4px 0 0}
</style>
<div class="pick"><select aria-label="类型过滤器"><option>无选择过滤器</option></select>${svg('arrow')}</div>
<div class="pick scope"><select aria-label="选择范围"><option>仅在工作部件内</option></select>${svg('arrow')}</div>
${tool('link',32)}${tool('backfilter',32)}${tool('solid',36)}${tool('arrow',10)}${tool('filter',26)}${tool('arrow',16)}${tool('rotback',32)}${tool('binoc',32)}${tool('dashcube',34)}${tool('marquee',32)}${tool('arrow',10)}
<div class="gap"></div>
${tool('endpt',32)}${tool('snapx',32)}${tool('center',34)}${tool('quad',32)}${tool('exist',34)}${tool('oncurve',34)}${tool('face',30)}
<div class="stack" style="align-items:center;width:28px">${tool('mesh',28)}${tool('grid',28)}</div>
<i class="sep" style="margin-left:4px"></i>
<div class="named">
	<tool-button icon="bbox">包容体</tool-button>
	<tool-button menu>导入导出</tool-button>
	<tool-button menu>WCS</tool-button>
	<tool-button icon="wcs"></tool-button>
</div>
<div class="stack" style="padding-left:10px"><tool-button icon="regen" style="padding-left:2px">重新生成</tool-button><tool-button icon="cam">进入加工模块</tool-button></div>
<div class="stack" style="padding:0 8px 0 10px"><tool-button>录制宏</tool-button><tool-button disabled>宏用户输入</tool-button></div>
<i class="sep"></i>
<div class="named" style="padding:0 8px 0 12px"><tool-button icon="measure">查询实体尺寸</tool-button></div>
${tool('refresh',22)}${tool('arrow',24)}${tool('fit',22)}${tool('arrow',20)}${tool('laptop',26)}${tool('arrow',18)}
<div class="stack" style="width:78px"><div class="row">${tool('cube',20)}${tool('arrow',18)}${tool('layers',20)}${tool('arrow',18)}</div>
<div class="row">${tool('showhide',20)}${tool('arrow',18)}${tool('white',20)}${tool('arrow',18)}</div></div>
<i class="sep"></i>
<button type="button" class="more" aria-label="更多">${svg('arrow')}</button>`);

define('nx-workarea',()=>`
<style>
	:host{display:flex;flex:1;min-height:0;border-bottom:1px solid #a8a8a8}
</style>
<slot name="rail"></slot><slot name="panel"></slot><slot></slot>`);

define('nx-sidebar',()=>`
<style>
	:host{display:flex;flex-direction:column;flex:none;width:32px;background:#dcdcdc;border-right:1px solid #aaa}
	button{height:42px;display:flex;align-items:center;justify-content:center;padding-left:4px;flex:none}
	.gear{height:26px;padding:0;margin-bottom:16px}
	.on{background:white;border:1px solid #999;border-right:0;margin:-1px -1px -1px 2px;height:44px}
	.far{margin-top:12px}
</style>
<button type="button" class="gear" aria-label="设置">${svg('gear')}</button>
${[['asm'],['constraint'],['partnav','on'],['books'],['info','far'],['web','far'],['clock','far'],['rainbow'],['wizard'],['tools']].map(i=>`<button type="button" class="${i[1]||''}" aria-label="${i[0]}">${svg(i[0])}</button>`).join('')}`);

// [icon, label, greyed, bold]
const FEATURES=[['datum','基准坐标系 (0)',1],['cube','块 (1)'],['seg','直线 (2)',1],['seg','直线 (3)',1],['seg','直线 (4)',1],['seg','直线 (5)',1],['extrude','拉伸 (6)'],['draft','拔模 (7)'],['draft','拔模 (8)'],['draft','拔模 (9)',0,1]];
const expander=(sign,first,last)=>`<svg width="20" height="20"><path d="M9.5 ${first?10:0}V${last?10:20}M14 10.5h6" stroke="#999" stroke-dasharray="1 1"/><rect x="5.5" y="6.5" width="8" height="8" fill="#fff" stroke="#ccc"/><path d="M7 10.5h5${sign=='+'?'M9.5 8v5':''}" stroke="#111"/></svg>`;
const branch=last=>`<svg width="12" height="20"><path d="M.5 0V${last?11:20}M1 10.5h9" stroke="#999" stroke-dasharray="1 1"/></svg>`;
define('part-navigator',()=>{
	const rows=[
		`<td><div>${expander('+',1)}${svg('views')}<span>模型视图</span></div></td><td></td><td></td><td></td>`,
		`<td><div>${expander('+')}${svg('tick')}${svg('camera')}<span>摄像机</span></div></td><td></td><td></td><td></td>`,
		`<td><div>${expander('-',0,1)}${svg('folder')}<span>模型历史记录</span></div></td><td></td><td></td><td></td>`
	];
	FEATURES.forEach((f,i)=>rows.push(`<td><div class="kid">${branch(i==9)}<label class="${f[2]?'grey':''} ${f[3]?'bold':''}"><input type="checkbox" checked>${svg(f[0])}<span>${f[1]}</span></label></div></td><td class="up">${svg('tick')}</td><td></td><td></td>`));
	while(rows.length<35)rows.push('<td></td><td></td><td></td><td></td>');
	return `
<style>
	:host{display:flex;flex-direction:column;flex:none;width:699px;padding:0 9px 6px 6px;border-right:1px solid #999}
	header{display:flex;align-items:center;justify-content:space-between;height:29px;padding:0 8px 0 4px;font-size:12px;flex:none}
	header button{width:12px;height:10px;border:1px solid #111;border-top-width:2px}
	.box{flex:1;min-height:0;overflow:hidden;border:1px solid #d0d0d0;padding:1px}
	table{width:100%;border-collapse:separate;border-spacing:0;table-layout:fixed;font-size:12px;line-height:16px}
	th{height:20px;padding:0 0 0 6px;background:#efefef;text-align:left;font-weight:400;border-right:1px solid #d4d4d4;border-bottom:1px solid #d4d4d4;white-space:nowrap}
	th svg{display:inline;margin-left:14px;vertical-align:1px}
	th:last-child,td:last-child{border-right:0}
	td{height:20px;padding:0;border-right:1px solid #ebebeb;border-bottom:1px solid #ebebeb;white-space:nowrap}
	tr:nth-child(even) td{background:#fafafa}
	td>div,label{display:flex;align-items:center;height:19px;gap:2px}
	td>div>svg:first-child{margin-right:-2px}
	label svg{width:16px}
	.kid{padding-left:28px}
	.kid label{gap:3px}
	.up{padding-left:5px}
	.grey{color:#9a9a9a}.bold{font-weight:700}
	input{appearance:none;width:12px;height:12px;margin:0;border:1px solid #000;background:white;position:relative}
	input:checked::after{content:"";position:absolute;left:1px;top:0;width:8px;height:5px;border:solid #12b822;border-width:0 0 3px 3px;transform:rotate(-48deg)}
	.split{height:6px;flex:none;background:#dcdcdc;border:1px solid #aaa;border-width:1px 1px 2px}
	.fold{display:flex;align-items:center;justify-content:space-between;height:24px;flex:none;width:100%;padding:3px 6px 0 7px;border-bottom:2px solid #d4d4d4;font-size:14px;color:var(--ink)}
</style>
<header><span>部件导航器</span><button type="button" aria-label="最大化"></button></header>
<div class="box"><table><colgroup><col style="width:200px"><col style="width:100px"><col style="width:100px"><col></colgroup>
<thead><tr><th>名称 <svg width="10" height="6"><path d="M0 6l5-6 5 6z" fill="#111"/></svg></th><th>最新</th><th>附注</th><th></th></tr></thead>
<tbody>${rows.map(r=>`<tr>${r}</tr>`).join('')}</tbody></table></div>
<div class="split"></div>
${['相关性','细节','预览'].map(t=>`<button type="button" class="fold"><span>${t}</span>${svg('chev')}</button>`).join('')}`;
});

define('nx-viewport',()=>`
<style>
	:host{display:flex;flex-direction:column;flex:1;min-width:0}
	.tab{display:flex;align-items:center;gap:6px;width:120px;height:21px;padding-left:7px;background:var(--teal);color:white;font-size:12px}
	.canvas{flex:1;min-height:0;overflow:hidden;border-top:2px solid var(--teal);border-left:1px solid #c8c8c8;border-right:1px solid #ddd;border-bottom:1px solid #ddd;background:#24262b}
	text{font-family:"Liberation Sans",sans-serif;font-size:13px}
</style>
<div class="tab">${svg('part')}<span>顺序铣.prt</span>${svg('edit')}${svg('closeg')}</div>
<div class="canvas"><svg width="1187" height="798" viewBox="732 219 1187 798" aria-label="模型视图">
	<path d="M1095.5 587.5h220v220h-220z" fill="#fff" stroke="#3a3a3a"/>
	<path d="M1144.5 627.5h136l-16 8h-116z" fill="#666" stroke="#222"/>
	<path d="M1144.5 627.5l4 8v172h-4z" fill="#d4d4d4" stroke="#222"/>
	<path d="M1264.5 635.5l16-8v94l1 1v85h-16v-84l-1-1z" fill="#bcbcbc" stroke="#222"/>
	<path d="M1098 587h50" stroke="#2fae35" stroke-width="1.5"/><path d="M1124 585h18l10 2-10 2h-18l-15-2z" fill="#3fb845"/><path d="M1110 588h38" stroke="#91cf94"/>
	<path d="M1095.5 592v52" stroke="#e68a8f"/><path d="M1094 600h3v16l1 18-2 5-2-5z" fill="#e3858a"/><path d="M1094 600h1.5v38h-1.5z" fill="#c9252b"/>
	<circle cx="1096" cy="587" r="3" fill="#1648e8"/>
	<text x="1095" y="587" fill="#164af0">ZC</text><text x="1138" y="583" fill="#2f9a38">YC</text><text x="1099" y="655" fill="#d24245">XC</text>
	<path d="M795.5 951.5h26v25h-26z" fill="#a3a3a3" stroke="#b9b9b9"/>
	<path d="M796 951h32" stroke="#33b13a" stroke-width="2"/><path d="M828 948l11 3-11 3z" fill="#2e9935"/>
	<path d="M795 952v34" stroke="#c9292d" stroke-width="2"/><path d="M792 984h6l-3 11z" fill="#c9292d"/>
	<circle cx="795" cy="951" r="4" fill="#c6c6c6"/><path d="M793 947h5v8h-5z" fill="#1245e8"/>
	<text x="840" y="956" fill="#2f9a38">Y</text><text x="791" y="1004" fill="#a3282c">X</text>
</svg></div>`);

define('nx-status',()=>`
<style>
	:host{display:flex;align-items:center;justify-content:space-between;flex:none;height:21px;padding:0 55px 2px 3px;font-weight:700}
	div{display:flex;gap:4px}
</style>
<span><slot></slot></span><div>${svg('miniflag')}${svg('full')}</div>`);

define('win-taskbar',()=>`
<style>
	:host{display:flex;align-items:stretch;flex:none;height:40px;color:white;background:linear-gradient(90deg,#22333d 0,#22333d 30%,#2c3232 40%,#282f31 60%,#2a2d2f 76%,#1e2c34 86%,#1d2d37 100%)}
	button,.search,.tray,.weather{display:flex;align-items:center;justify-content:center;flex:none}
	.start{width:48px}
	.search{width:288px;background:#f2f2f2;border:1px solid #c6c6c6;padding-left:11px;gap:11px}
	.search input{flex:1;min-width:0;width:0;background:none;border:0;padding:0;outline:0;font:14px/20px "Noto Sans CJK SC",sans-serif}
	.search input::placeholder{color:#222;opacity:1}
	.app{width:49px;height:40px;padding-top:3px;position:relative;border-bottom:3px solid transparent}
	.app::after{content:"";position:absolute;left:4px;right:4px;bottom:-3px;height:3px;background:#76b9ed}
	.app.on{background:#536068;width:48px}
	.app.on::after{left:0;right:0}
	.view{width:48px;margin-right:2px}
	.weather{margin-left:auto;gap:6px;font-size:14px;width:101px;justify-content:flex-start}
	.tray{width:93px;margin-left:25px;gap:6px;justify-content:flex-start}
	.ime{font-size:17px}
	.clock{display:flex;flex-direction:column;justify-content:center;gap:2px;width:72px;padding-right:12px;text-align:center;font-size:12px}
	.note{width:43px;padding-right:4px;position:relative;font-size:11px;font-weight:700}
	.note span{position:absolute;left:20px;top:19px}
	.edge{width:5px;border-left:1px solid #68747a}
</style>
<button type="button" class="start" aria-label="开始">${svg('win')}</button>
<label class="search">${svg('lens')}<input type="text" placeholder="搜索" aria-label="搜索">${svg('dolphin')}</label>
<button type="button" class="view" aria-label="任务视图">${svg('taskview')}</button>
<button type="button" class="app" aria-label="文件资源管理器">${svg('explorer')}</button>
<button type="button" class="app" aria-label="Edge">${svg('edge')}</button>
<button type="button" class="app" aria-label="QQ">${svg('qq')}</button>
<button type="button" class="app on" aria-label="NX">${svg('nx')}</button>
<div class="weather">${svg('weather')}<span>26°C</span><span>多云</span></div>
<div class="tray">${svg('trayup')}${svg('net')}${svg('sound')}<span class="ime">英</span></div>
<div class="clock"><span>22:49</span><span>2025/7/23</span></div>
<button type="button" class="note" aria-label="通知">${svg('note')}<span>3</span></button>
<i class="edge"></i>`);

// floating windows above the application

define('upload-pill',()=>`
<style>
	:host{display:block;position:absolute;right:170px;top:112px}
	button{display:flex;align-items:center;width:130px;height:38px;border:1px solid #0a93ff;border-radius:8px;overflow:hidden;background:#f0f8ff;color:#08a3ff;font-size:13px;font-weight:700;white-space:nowrap}
	i{width:36px;height:38px;display:flex;align-items:center;justify-content:center;background:linear-gradient(30deg,#35b4ff,#0694ff 70%);margin-right:7px}
</style>
<button type="button"><i>${svg('cloud')}</i><slot></slot></button>`);

define('spline-dialog',()=>`
<style>
	:host{display:block;position:absolute;left:588px;top:0;width:328px;height:204px;background:#f0f0f0;border:solid #d6d6d6;border-width:0 1px 1px}
	header{display:flex;align-items:center;height:24px;margin:0 -1px;padding:2px 9px 0 6px;background:var(--teal);color:white;font-size:14px}
	header span{flex:1;padding-left:7px}
	.list{display:flex;flex-direction:column;gap:2px;padding:8px 9px 0;font-size:12px}
	.list button{height:29px;border:1px solid #aaa}
	.list .now{padding:2px}
	.now span{display:flex;align-items:center;justify-content:center;height:100%;border:1px dotted #333}
	.list .hot{background:#aed5e0;border-color:#aed5e0}
	footer{display:flex;justify-content:flex-end;gap:5px;padding:14px 15px 0;font-size:12px}
	footer button{width:54px;height:25px;background:#dcdcdc;border:1px solid #aaa}
	footer .ok{background:#71b3c9;border-color:#71b3c9;color:white}
</style>
<header>${svg('cog')}<span><slot></slot></span><button type="button" aria-label="关闭">${svg('closew')}</button></header>
<div class="list"><button type="button">根据极点</button><button type="button" class="now"><span>通过点</span></button><button type="button">拟合</button><button type="button" class="hot">垂直于平面</button></div>
<footer><button type="button" class="ok">确定</button><button type="button">返回</button><button type="button">取消</button></footer>`);

define('red-mark',()=>`
<style>
	:host{display:block;position:absolute;left:575px;top:56px;width:350px;height:40px;border:3px solid #fc4d49;pointer-events:none}
</style>`);

define('water-mark',()=>`
<style>
	:host{display:flex;align-items:baseline;gap:2px;position:absolute;right:6px;bottom:2px;color:#ccc;opacity:.8;font:13px/20px "Liberation Mono",monospace;white-space:pre;pointer-events:none}
	.cjk{font:300 16px/20px "Noto Sans CJK SC",sans-serif}
	.url{margin-left:6px}
</style>
<span>UG</span><span class="cjk"><slot></slot></span><span class="url">WWW.UGSNX.COM</span>`);
</script>
</body>
</html>
